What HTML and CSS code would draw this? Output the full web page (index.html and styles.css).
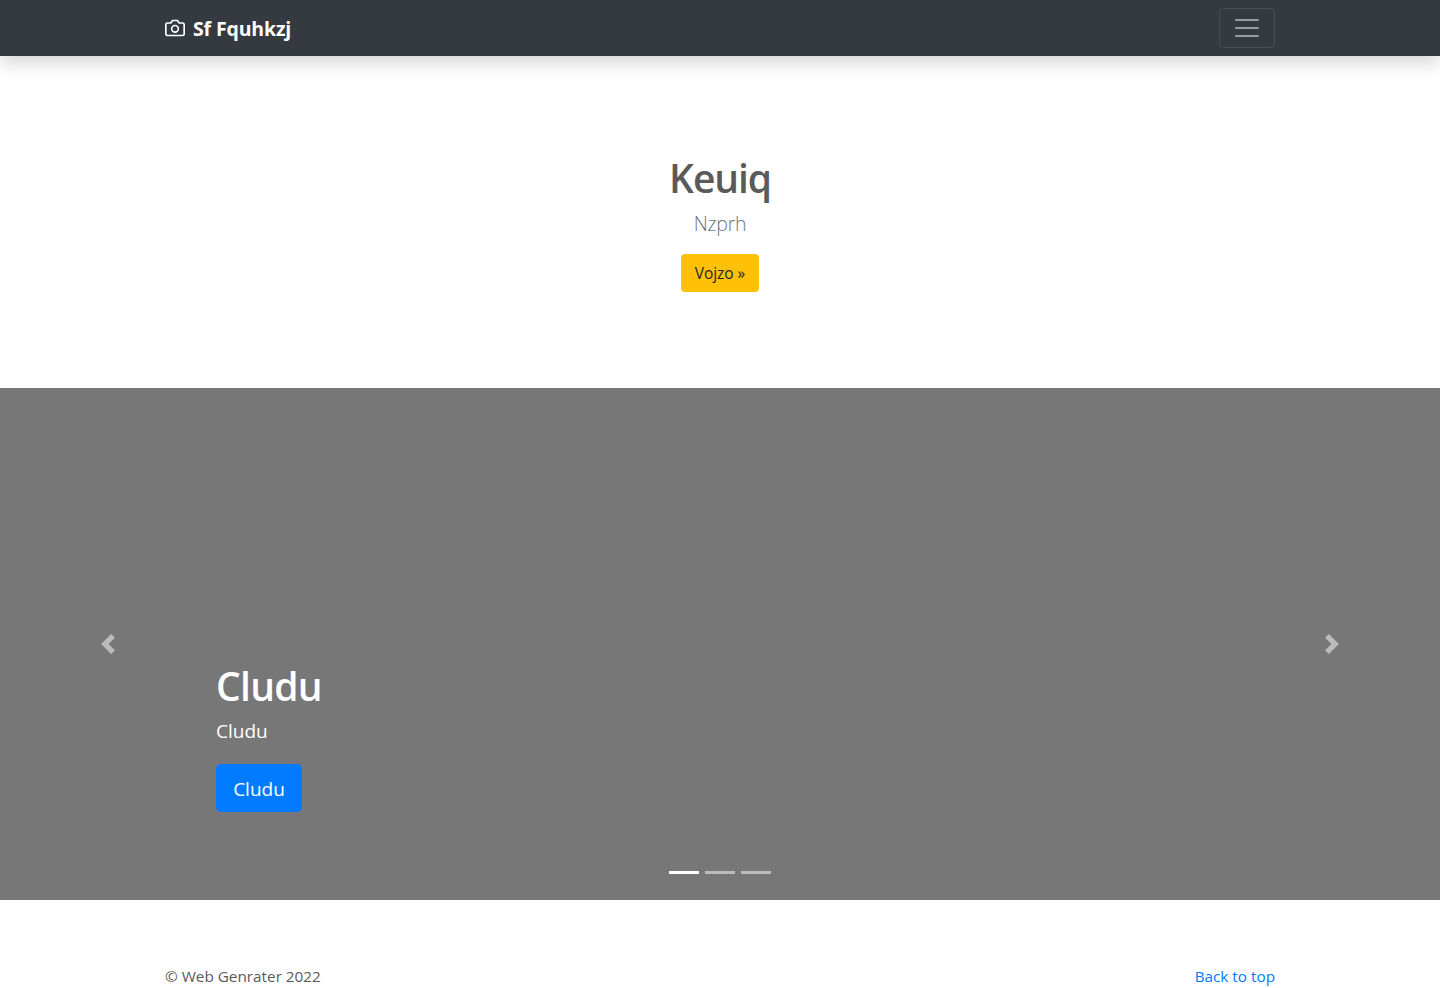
FILE: index.html
```html
<!DOCTYPE html>
<html lang="en">
<head>
<meta charset="utf-8">
<title>Sf Fquhkzj</title>
<link rel="stylesheet" href="styles.css">
</head>
<body>
<header class="navbar">
  <div class="container navbar-inner">
    <a class="brand" href="#">
      <svg class="brand-icon" width="20" height="20" viewBox="0 0 24 24" fill="none" stroke="currentColor" stroke-width="2" stroke-linecap="round" stroke-linejoin="round"><path d="M23 19a2 2 0 0 1-2 2H3a2 2 0 0 1-2-2V8a2 2 0 0 1 2-2h4l2-3h6l2 3h4a2 2 0 0 1 2 2z"/><circle cx="12" cy="13" r="4"/></svg>
      <strong class="brand-name">Sf Fquhkzj</strong>
    </a>
    <button class="toggler" type="button" aria-label="Toggle navigation">
      <svg width="30" height="30" viewBox="0 0 30 30" stroke="rgba(255,255,255,.5)" stroke-width="2" stroke-linecap="round" stroke-miterlimit="10"><path d="M4 7h22M4 15h22M4 23h22"/></svg>
    </button>
  </div>
</header>
<main>
  <section class="hero">
    <h1 class="hero-title">Keuiq</h1>
    <p class="hero-lead">Nzprh</p>
    <a class="btn btn-warning" href="#">Vojzo »</a>
  </section>
  <section class="carousel">
    <div class="caption">
      <h1 class="caption-title">Cludu</h1>
      <p class="caption-lead">Cludu</p>
      <a class="btn btn-primary" href="#">Cludu</a>
    </div>
    <a class="control control-prev" href="#" aria-label="Previous"><svg width="20" height="20" viewBox="0 0 8 8" fill="#fff"><path d="M5.250 0l-4 4 4 4 1.500-1.500L4.250 4l2.500-2.500L5.250 0z"/></svg></a>
    <a class="control control-next" href="#" aria-label="Next"><svg width="20" height="20" viewBox="0 0 8 8" fill="#fff"><path d="M2.750 0l-1.500 1.500L3.750 4l-2.500 2.500L2.750 8l4-4-4-4z"/></svg></a>
    <div class="indicators"><span class="indicator active"></span><span class="indicator"></span><span class="indicator"></span></div>
  </section>
</main>
<footer class="container footer">
  <span class="copyright">© Web Genrater 2022</span>
  <a class="back" href="#">Back to top</a>
</footer>
</body>
</html>
```
FILE: styles.css
```css
* { box-sizing: border-box; }
body {
  margin: 0;
  height: 988px;
  overflow: hidden;
  background: #fff;
  color: #5a5a5a;
  font-family: "Segoe UI", "Open Sans", "Noto Sans", sans-serif;
  font-size: 16px;
  line-height: 24px;
}
a { color: #007bff; text-decoration: none; }
h1, p { margin: 0; }
.container { width: 1110px; margin: 0 auto; }
.navbar {
  position: relative;
  height: 56px;
  padding: 8px 0;
  background: #343a40;
  box-shadow: 0 8px 16px rgba(0, 0, 0, .15);
}
.navbar-inner { display: flex; align-items: center; justify-content: space-between; }
.brand { display: flex; align-items: center; gap: 8px; color: #fff; }
.brand-name { padding-top: 2px; font-size: 19.5px; line-height: 28px; font-weight: 700; letter-spacing: -.15px; }
.toggler {
  display: flex;
  align-items: center;
  justify-content: center;
  width: 56px;
  height: 40px;
  padding: 0;
  background: transparent;
  border: 1px solid rgba(255, 255, 255, .1);
  border-radius: 4px;
}
.hero {
  display: flex;
  flex-direction: column;
  align-items: center;
  height: 332px;
  padding-top: 98px;
}
.hero-title, .caption-title { font-size: 39px; line-height: 48px; font-weight: 600; }
.hero-title { letter-spacing: -1.1px; }
.caption-title { letter-spacing: -.7px; }
.hero-lead { margin: 7px 0 15px; font-size: 19.5px; line-height: 30px; font-weight: 300; letter-spacing: -.3px; color: #6c757d; }
.btn { display: flex; align-items: center; justify-content: center; border-radius: 4px; }
.btn-warning { width: 78px; height: 38px; background: #ffc107; color: #212529; font-size: 15.5px; letter-spacing: -.05px; }
.carousel { position: relative; height: 512px; background: #777; }
.caption {
  display: flex;
  flex-direction: column;
  align-items: flex-start;
  padding: 274px 0 0 216px;
  color: #fff;
}
.caption-lead { margin: 6px 0 18px; font-size: 19px; line-height: 30px; }
.btn-primary { width: 86px; height: 48px; padding-top: 2px; background: #007bff; color: #fff; font-size: 19px; border-radius: 5px; }
.control {
  position: absolute;
  top: 0;
  bottom: 0;
  display: flex;
  align-items: center;
  justify-content: center;
  width: 15%;
  opacity: .5;
}
.control-prev { left: 0; }
.control-next { right: 0; }
.indicators {
  position: absolute;
  left: 0;
  right: 0;
  bottom: 26px;
  display: flex;
  justify-content: center;
  gap: 6px;
}
.indicator { width: 30px; height: 3px; background: #fff; opacity: .5; }
.indicator.active { opacity: 1; }
.footer { display: flex; justify-content: space-between; padding-top: 64px; font-size: 15.3px; }
```
